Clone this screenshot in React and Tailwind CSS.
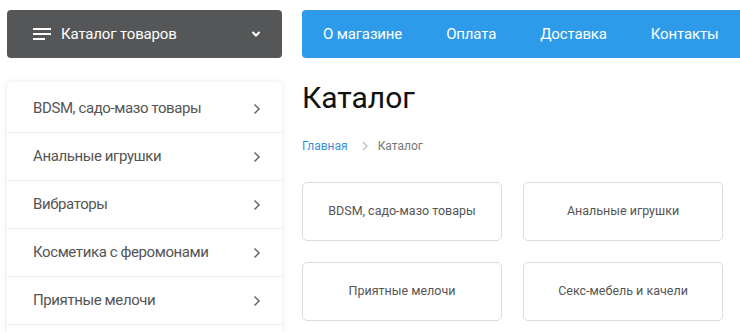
const sideItems = [
  "BDSM, садо-мазо товары",
  "Анальные игрушки",
  "Вибраторы",
  "Косметика с феромонами",
  "Приятные мелочи",
  "Секс-мебель и качели",
];

const cards = [
  "BDSM, садо-мазо товары",
  "Анальные игрушки",
  "Приятные мелочи",
  "Секс-мебель и качели",
];

const nav = ["О магазине", "Оплата", "Доставка", "Контакты"];

function Chevron({ className }) {
  return (
    <svg width="8" height="12" viewBox="0 0 8 12" className={className}>
      <path d="M1.5 1.5 L6 6 L1.5 10.5" fill="none" stroke="currentColor" strokeWidth="1.5" />
    </svg>
  );
}

export default function App() {
  return (
    <div className="w-[740px] h-[332px] overflow-hidden bg-white font-['Roboto',sans-serif]">
      <div className="flex gap-[20px] pl-[7px] pt-[10px] w-[900px]">
        {/* LEFT */}
        <div className="w-[275px] shrink-0">
          <div className="h-[48px] bg-[#555657] rounded-[4px] flex items-center pl-[26px] pr-[21px] text-white">
            <div className="flex flex-col gap-[3px] mr-[10px]">
              <span className="block w-[18px] h-[2px] bg-white"></span>
              <span className="block w-[18px] h-[2px] bg-white"></span>
              <span className="block w-[12px] h-[2px] bg-white"></span>
            </div>
            <span className="text-[15px] tracking-[-0.15px] flex-1">Каталог товаров</span>
            <svg width="10" height="8" viewBox="0 0 10 8">
              <path d="M1.5 2 L5 5.5 L8.5 2" fill="none" stroke="white" strokeWidth="2" />
            </svg>
          </div>

          <div className="mt-[24px] bg-white rounded-[4px] shadow-[0_0_6px_rgba(0,0,0,0.1)] pt-[3px]">
            {sideItems.map((item) => (
              <div
                key={item}
                className="h-[48px] flex items-center justify-between pl-[26px] pr-[21px] border-b border-[#ececec] text-[15px] tracking-[-0.4px] text-[#555]"
              >
                <span>{item}</span>
                <Chevron className="text-[#666]" />
              </div>
            ))}
          </div>
        </div>

        {/* RIGHT */}
        <div className="flex-1">
          <div className="h-[48px] bg-[#2e9bea] rounded-[4px] flex items-center pl-[21px] gap-[44px] text-white text-[15px] tracking-[-0.15px]">
            {nav.map((n) => (
              <span key={n}>{n}</span>
            ))}
          </div>

          <h1 className="mt-[22px] text-[30px] leading-[36px] text-[#111]">Каталог</h1>

          <div className="mt-[21px] flex items-center text-[12px] leading-[18px]">
            <span className="text-[#3a8fd9]">Главная</span>
            <svg width="6" height="10" viewBox="0 0 6 10" className="ml-[14px] mr-[10px] text-[#bbb]">
              <path d="M1 1 L5 5 L1 9" fill="none" stroke="currentColor" strokeWidth="1.2" />
            </svg>
            <span className="text-[#777]">Каталог</span>
          </div>

          <div className="mt-[27px] grid grid-cols-[200px_200px] gap-[21px]">
            {cards.map((c) => (
              <div
                key={c}
                className="h-[59px] border border-[#dcdcdc] rounded-[5px] flex items-center justify-center text-[12.5px] text-[#555]"
              >
                {c}
              </div>
            ))}
          </div>
        </div>
      </div>
    </div>
  );
}
